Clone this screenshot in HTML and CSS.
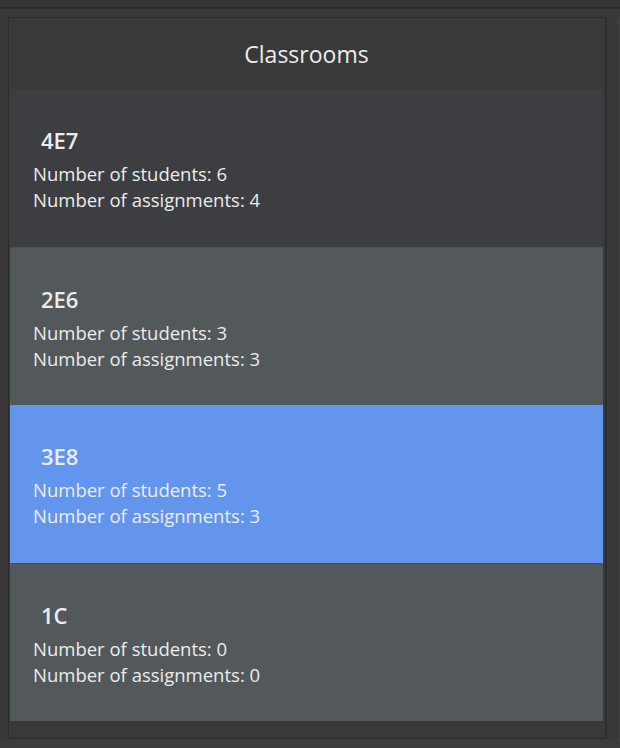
FILE: index.html
```html
<!DOCTYPE html>
<html>
<head>
<meta charset="utf-8">
<link rel="stylesheet" href="styles.css">
</head>
<body>
<div class="topbar"></div>
<div class="frame">
  <div class="panel">
    <div class="header">Classrooms</div>
    <div class="list">
      <div class="row row-dark">
        <div class="name">4E7</div>
        <div class="info">Number of students: 6</div>
        <div class="info">Number of assignments: 4</div>
      </div>
      <div class="row row-grey">
        <div class="name">2E6</div>
        <div class="info">Number of students: 3</div>
        <div class="info">Number of assignments: 3</div>
      </div>
      <div class="row row-selected">
        <div class="name">3E8</div>
        <div class="info">Number of students: 5</div>
        <div class="info">Number of assignments: 3</div>
      </div>
      <div class="row row-grey">
        <div class="name">1C</div>
        <div class="info">Number of students: 0</div>
        <div class="info">Number of assignments: 0</div>
      </div>
    </div>
  </div>
  <div class="side"></div>
</div>
<div class="bottombar"></div>
</body>
</html>
```
FILE: styles.css
```css
html, body {
  margin: 0;
  padding: 0;
  width: 620px;
  height: 748px;
  overflow: hidden;
  background: #3a3a3a;
  font-family: "Open Sans", "Noto Sans", sans-serif;
}
.topbar {
  height: 7px;
  background: #353535;
  border-bottom: 1px solid #2c2c2c;
}
.frame {
  display: flex;
  height: 731px;
  background: #383838;
  border-top: 1px solid #2e2e2e;
  padding-top: 8px;
  box-sizing: border-box;
}
.panel {
  flex: none;
  margin-left: 8px;
  width: 598px;
  height: 722px;
  box-sizing: border-box;
  border: 1px solid #2d2d2d;
  background: #393939;
  padding: 0 2px 0 1px;
  display: flex;
  flex-direction: column;
}
.header {
  height: 71px;
  flex: none;
  display: flex;
  align-items: center;
  justify-content: center;
  color: #ececec;
  font-size: 23px;
  padding-top: 1px;
  box-sizing: border-box;
}
.list {
  display: flex;
  flex-direction: column;
}
.row {
  height: 158px;
  box-sizing: border-box;
  padding: 37px 0 0 23px;
  color: #ececec;
}
.row-dark { background: #3c3e41; }
.row-grey { background: #53585b; border-top: 1px solid #4c5053; }
.row-selected { background: #6495ed; }
.name {
  font-size: 22px;
  font-weight: 600;
  padding-left: 8px;
  line-height: 28px;
  margin-bottom: 7px;
}
.info {
  font-size: 18.5px;
  line-height: 26px;
}
.side {
  flex: none;
  width: 12px;
  border-left: 1px solid #2f2f2f;
  border-right: 1px solid #444;
}
.bottombar {
  height: 9px;
  background: #3c3c3c;
}
```
